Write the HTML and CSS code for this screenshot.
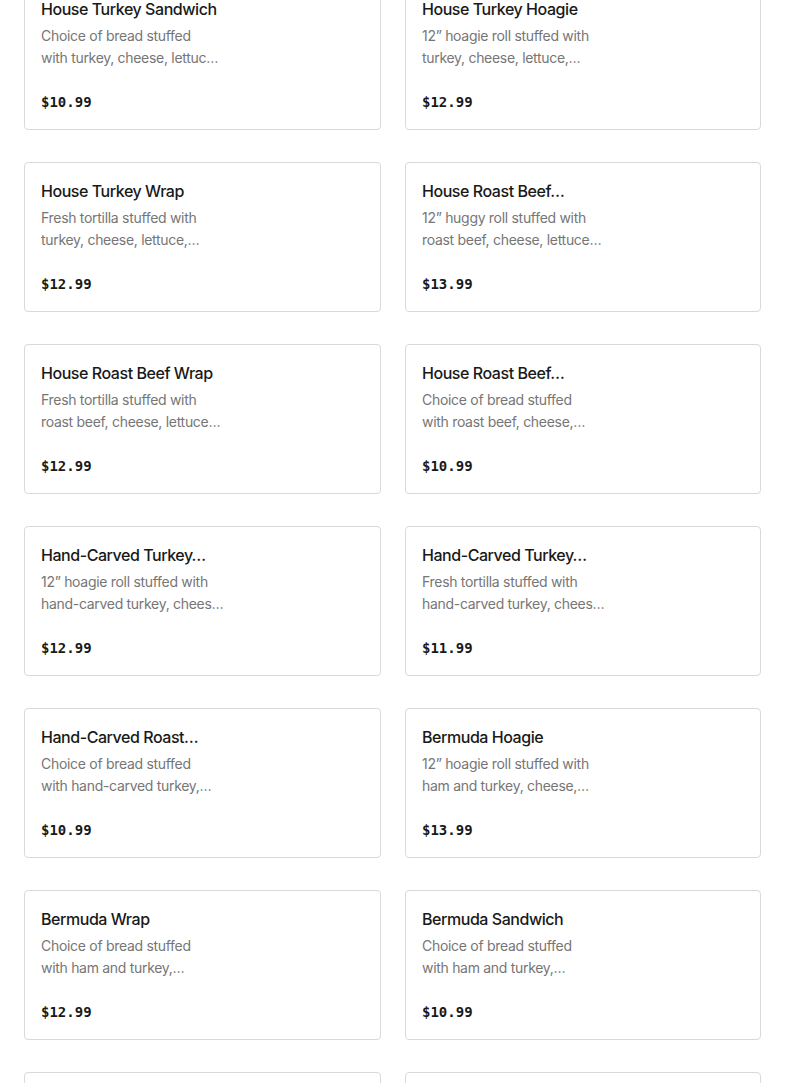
FILE: index.html
```html
<!DOCTYPE html>
<html lang="en">
<head>
<meta charset="utf-8">
<title>Menu</title>
<link rel="stylesheet" href="styles.css">
</head>
<body>
<div class="menu-grid">
  <div class="card"><div class="title">House Turkey Sandwich</div><div class="desc">Choice of bread stuffed<br>with turkey, cheese, lettuc…</div><div class="price">$10.99</div></div>
  <div class="card"><div class="title">House Turkey Hoagie</div><div class="desc">12” hoagie roll stuffed with<br>turkey, cheese, lettuce,…</div><div class="price">$12.99</div></div>
  <div class="card"><div class="title">House Turkey Wrap</div><div class="desc">Fresh tortilla stuffed with<br>turkey, cheese, lettuce,…</div><div class="price">$12.99</div></div>
  <div class="card"><div class="title">House Roast Beef…</div><div class="desc">12” huggy roll stuffed with<br>roast beef, cheese, lettuce…</div><div class="price">$13.99</div></div>
  <div class="card"><div class="title">House Roast Beef Wrap</div><div class="desc">Fresh tortilla stuffed with<br>roast beef, cheese, lettuce…</div><div class="price">$12.99</div></div>
  <div class="card"><div class="title">House Roast Beef…</div><div class="desc">Choice of bread stuffed<br>with roast beef, cheese,…</div><div class="price">$10.99</div></div>
  <div class="card"><div class="title">Hand-Carved Turkey…</div><div class="desc">12” hoagie roll stuffed with<br>hand-carved turkey, chees…</div><div class="price">$12.99</div></div>
  <div class="card"><div class="title">Hand-Carved Turkey…</div><div class="desc">Fresh tortilla stuffed with<br>hand-carved turkey, chees…</div><div class="price">$11.99</div></div>
  <div class="card"><div class="title">Hand-Carved Roast…</div><div class="desc">Choice of bread stuffed<br>with hand-carved turkey,…</div><div class="price">$10.99</div></div>
  <div class="card"><div class="title">Bermuda Hoagie</div><div class="desc">12” hoagie roll stuffed with<br>ham and turkey, cheese,…</div><div class="price">$13.99</div></div>
  <div class="card"><div class="title">Bermuda Wrap</div><div class="desc">Choice of bread stuffed<br>with ham and turkey,…</div><div class="price">$12.99</div></div>
  <div class="card"><div class="title">Bermuda Sandwich</div><div class="desc">Choice of bread stuffed<br>with ham and turkey,…</div><div class="price">$10.99</div></div>
  <div class="card"><div class="title">Italian Hoagie</div><div class="desc">12” hoagie roll stuffed with<br>ham, salami, capicola,…</div><div class="price">$13.99</div></div>
  <div class="card"><div class="title">Italian Wrap</div><div class="desc">Fresh tortilla stuffed with<br>ham, salami, capicola,…</div><div class="price">$12.99</div></div>
</div>
</body>
</html>
```
FILE: styles.css
```css
html, body {
  margin: 0;
  padding: 0;
  background: #ffffff;
}

body {
  font-family: Inter, "Noto Sans", "Liberation Sans", sans-serif;
  color: #191919;
  overflow: hidden;
}

.menu-grid {
  display: grid;
  grid-template-columns: 357px 356px;
  column-gap: 24px;
  row-gap: 32px;
  padding: 0 24px;
  margin-top: -20px;
}

.card {
  box-sizing: border-box;
  height: 150px;
  border: 1px solid #d9d9d9;
  border-radius: 4px;
  padding: 16px;
  display: flex;
  flex-direction: column;
}

.title {
  font-size: 16px;
  font-weight: 500;
  line-height: 24px;
  letter-spacing: -0.45px;
  color: #191919;
  white-space: nowrap;
}

.desc {
  margin-top: 4px;
  font-size: 14px;
  line-height: 22px;
  letter-spacing: -0.3px;
  color: #767676;
  white-space: nowrap;
  height: 44px;
}

.price {
  margin-top: 23px;
  font-family: "DejaVu Sans Mono", "Liberation Mono", monospace;
  font-size: 14px;
  font-weight: 700;
  line-height: 20px;
  color: #191919;
}
```
